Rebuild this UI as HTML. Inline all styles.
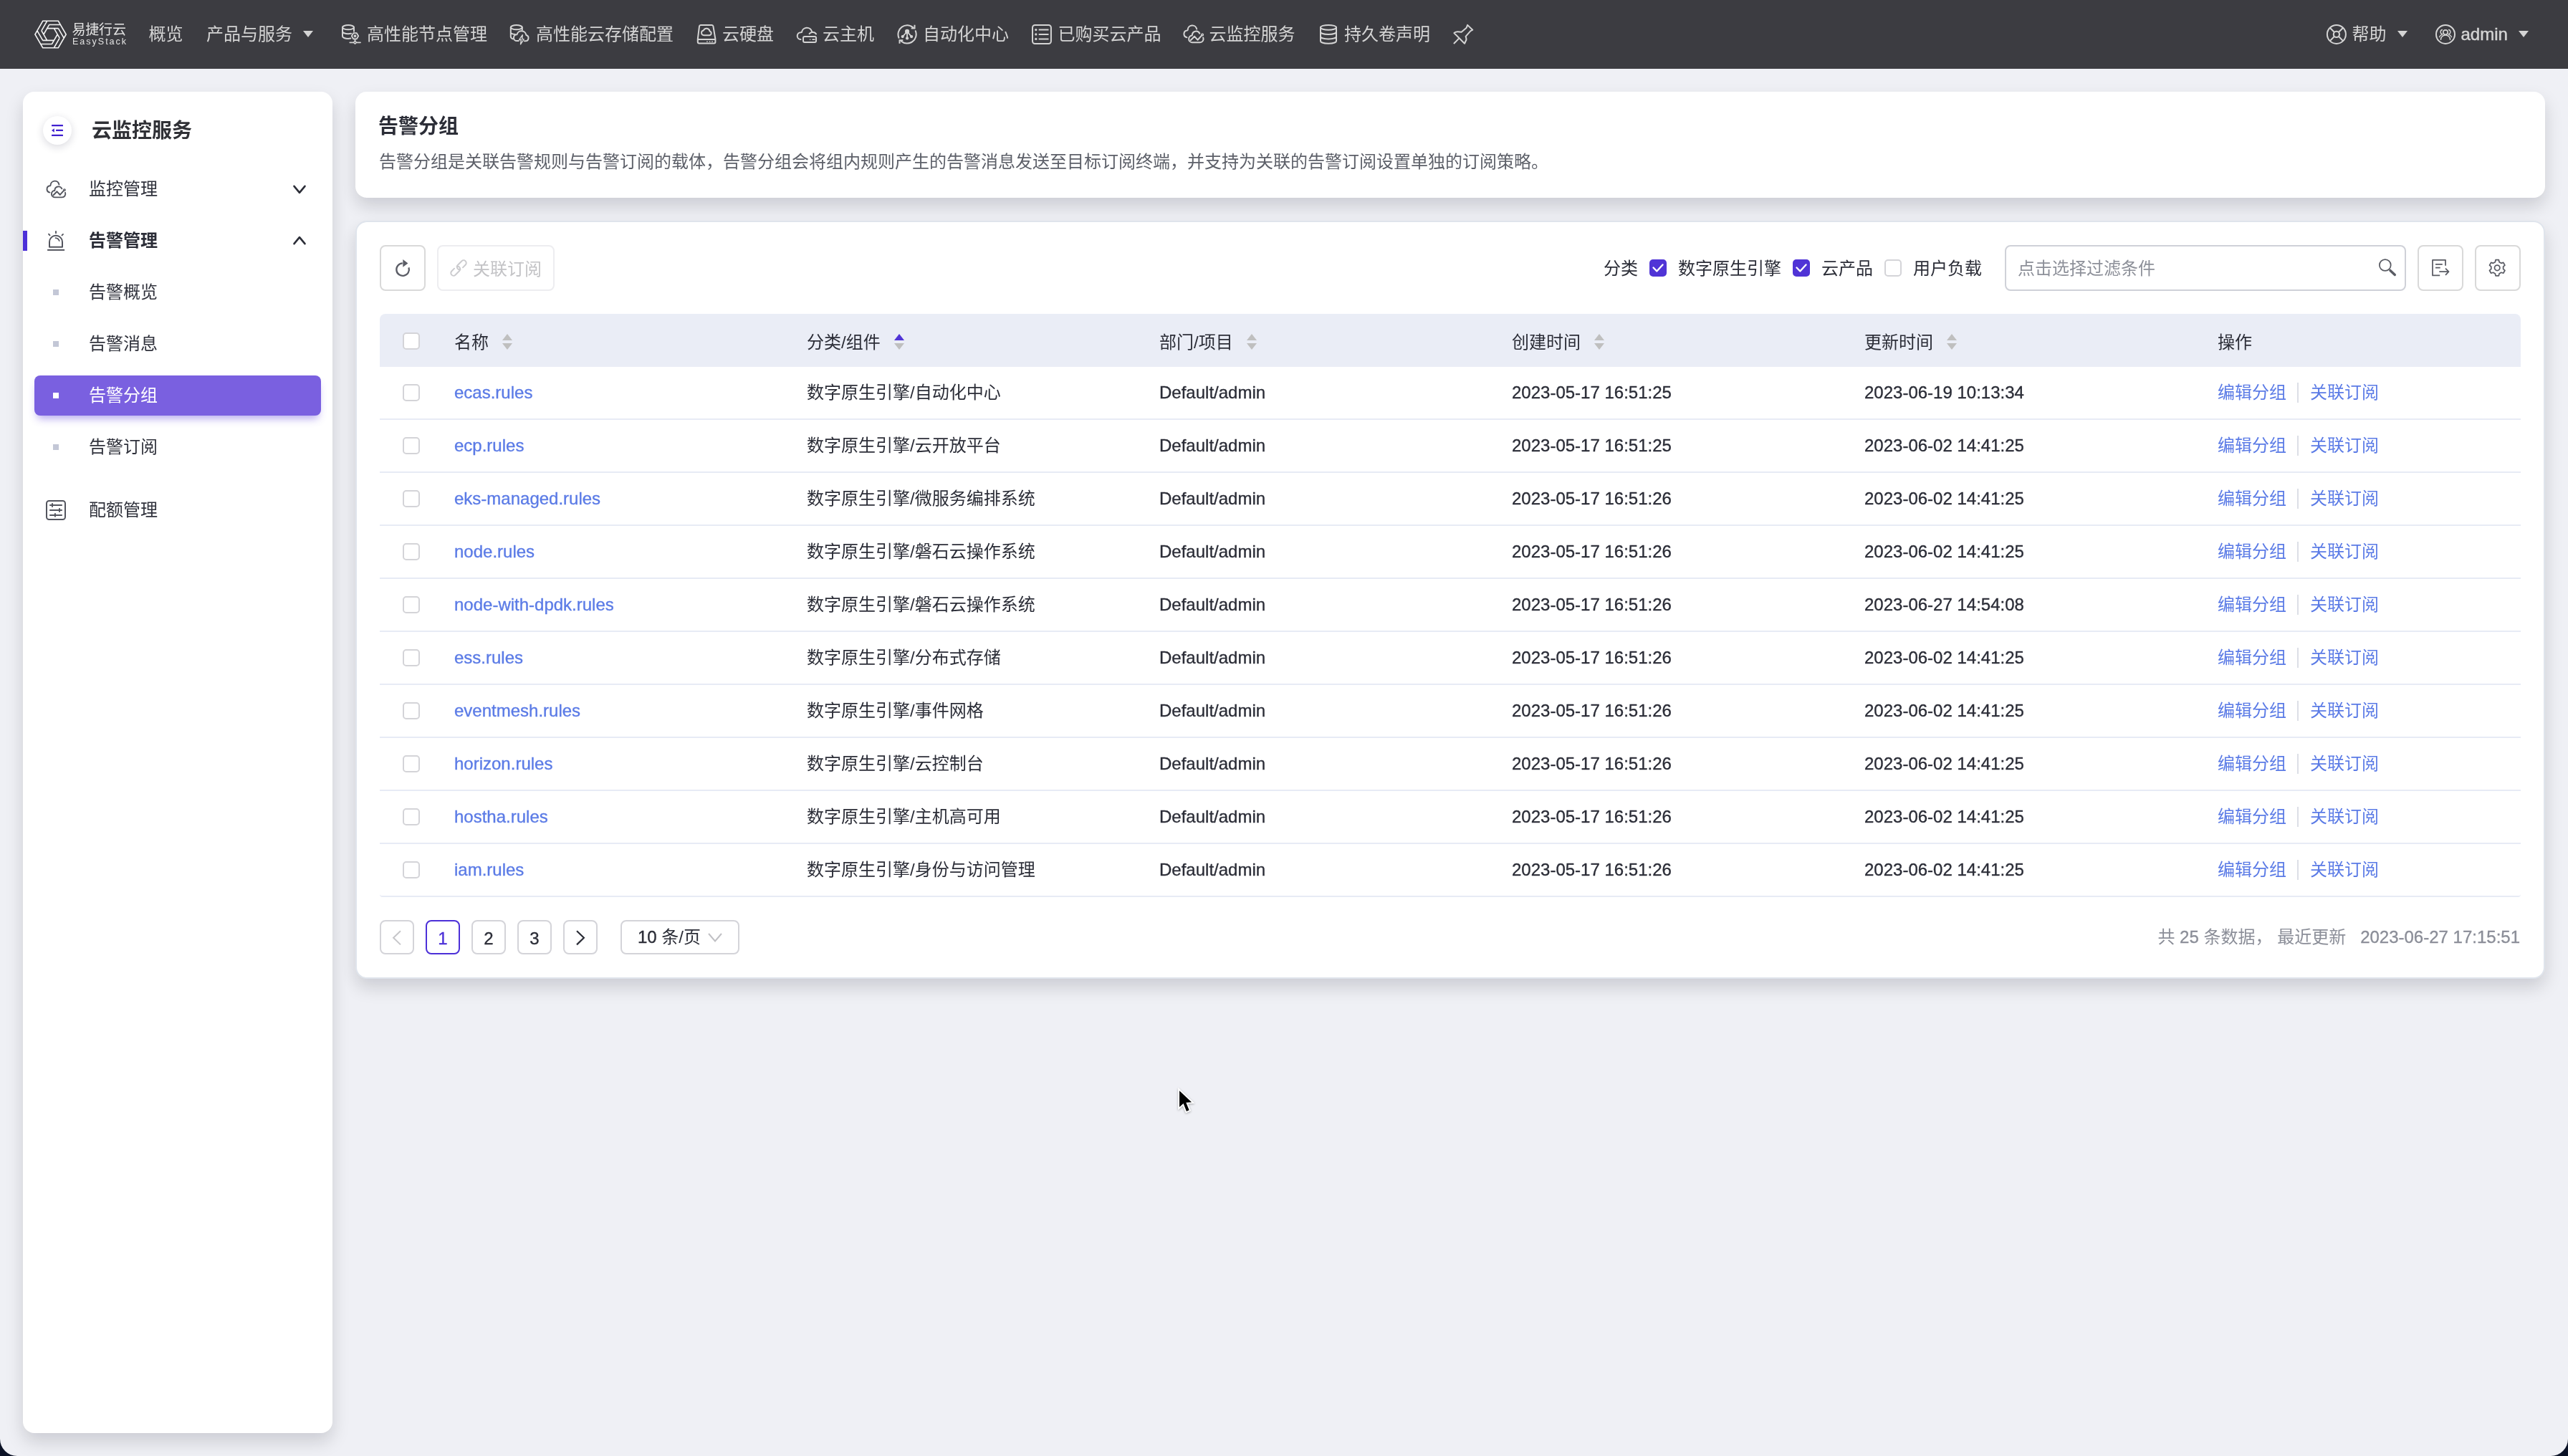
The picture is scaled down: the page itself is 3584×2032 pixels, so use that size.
<!DOCTYPE html><html lang="zh-CN"><head><meta charset="utf-8"><title>告警分组</title><style>
*{box-sizing:border-box;margin:0;padding:0}
html,body{width:3584px;height:2032px;overflow:hidden}
body{position:relative;background:#eff0f5;font-family:"Liberation Sans","Noto Sans CJK SC",sans-serif;font-size:24px;color:#2b2d37;-webkit-font-smoothing:antialiased}
#root{position:absolute;left:0;top:0;width:3584px;height:2032px;overflow:hidden;will-change:transform}
.abs{position:absolute}
svg{position:absolute;overflow:visible}
.t{position:absolute;white-space:nowrap}
#hdr{position:absolute;left:0;top:0;width:3584px;height:96px;background:#3c3c41;color:#d4d4d4}
#hdr .t{top:0;height:96px;line-height:96px;font-size:24px}
#hdr svg{fill:none;stroke:#d4d4d4;stroke-width:2;stroke-linecap:round;stroke-linejoin:round}
#hdr svg.f{fill:#d4d4d4;stroke:none}
.card{position:absolute;background:#fff;border-radius:16px;box-shadow:0 12px 24px rgba(8,8,22,.15)}
#side .t{font-size:24px;height:72px;line-height:72px;left:92px;color:#2f313b}
#side svg{fill:none;stroke:#53555e;stroke-width:2;stroke-linecap:round;stroke-linejoin:round}
.bul{position:absolute;left:42px;width:8px;height:8px;background:#c3c7d6}
#c2 .t{font-size:24px}
.btn{position:absolute;border:2px solid #d9d9d9;border-radius:8px;background:#fff}
.cb{position:absolute;width:24px;height:24px;border:2px solid #d4d4d8;border-radius:5px;background:#fff}
.cb.on{background:#5034d6;border-color:#5034d6}
.th{position:absolute;top:0;height:74px;line-height:80px;color:#2b2d37}
.row{position:absolute;left:0;width:2988px;height:74px;border-bottom:2px solid #e7ebf5}
.row .t{top:0;height:72px;line-height:72px}
.lk{color:#5b7be6}
.la{-webkit-text-stroke:.35px currentColor}
.sep{position:absolute;top:22px;width:2px;height:28px;background:#dcdfe6}
.pg{position:absolute;top:0;width:48px;height:48px;border:2px solid #d4d4d9;border-radius:8px;text-align:center;line-height:47px;font-size:24px;color:#2b2d37;background:#fff}
.sort{position:absolute;top:28px;width:14px;height:22px}
.sort i,.sort b{position:absolute;left:0;width:0;height:0;border-left:7px solid transparent;border-right:7px solid transparent}
.sort i{top:0;border-bottom:9px solid #bfbfbf}
.sort b{top:13px;border-top:9px solid #bfbfbf}
.sort.up i{border-bottom-color:#5034d6}
</style></head><body><div id="root">
<div id="hdr">
<svg style="left:0px;top:0px;left:0;top:0;stroke:#f2f2f2;stroke-width:1.6;stroke-linecap:butt;stroke-linejoin:miter" width="100" height="96" viewBox="0 0 100 96"><path d="M92.2 48 L81.38 66.75 L59.72 66.75 L48.9 48 L59.72 29.25 L81.38 29.25Z M65.73 39.65 L81.38 39.65 M68.73 34.45 L84.38 34.45 M75.37 39.65 L83.19 53.2 M81.38 39.65 L89.2 53.2 M80.19 48 L72.37 61.55 M83.19 53.2 L75.37 66.75 M75.37 56.35 L59.72 56.35 M72.37 61.55 L56.72 61.55 M65.73 56.35 L57.91 42.8 M59.72 56.35 L51.9 42.8 M60.91 48 L68.73 34.45 M57.91 42.8 L65.73 29.25"/></svg>
<div class="t" style="left:100.5px;top:29.5px;height:24px;line-height:24px;font-size:19px;letter-spacing:-0.2px;color:#e4e4e4">易捷行云</div>
<div class="t" style="left:101px;top:50px;height:16px;line-height:16px;font-size:12.5px;letter-spacing:2px;color:#e4e4e4">EasyStack</div>
<div class="t" style="left:207.5px">概览</div>
<div class="t" style="left:288px">产品与服务</div>
<svg style="left:476px;top:34px;" width="30" height="30" viewBox="0 0 30 30" stroke-width="1.8"><ellipse cx="10" cy="4.2" rx="8" ry="3.1"/><path d="M2 4.200V16.800C2 18.500 5.600 19.900 10 19.900c1.200 0 2.300-.100 3.300-.300M2 10.100c0 1.700 3.600 3.100 8 3.100 1.500 0 2.900-.200 4.100-.450M18 4.200V9.700"/><path d="M24.200 16.250l-2.350 4.070h-4.700l-2.350-4.070 2.350-4.070h4.700z" stroke-width="1.8"/><circle cx="19.500" cy="16.250" r="1.100" stroke-width="1.600"/><path d="M19.500 20.600v3M12.300 25.300h5.400M21.300 25.300H27" stroke-width="1.800"/><path d="M19.500 23.300l2 2-2 2-2-2z" stroke-width="1.400"/></svg>
<div class="t" style="left:512px">高性能节点管理</div>
<svg style="left:710px;top:34px;" width="30" height="30" viewBox="0 0 30 30" stroke-width="1.8"><ellipse cx="10.800" cy="4.200" rx="8" ry="3.100"/><path d="M2.800 4.200V17.300c0 1.200 1.100 2.300 3 3.100M2.800 11.300c0 1.300 2.600 2.400 6.200 2.800M18.800 4.200V7.800"/><path d="M13.800 23.100H11.300A4.400 4.400 0 0 1 11.400 14.300A6.600 6.600 0 0 1 24.330 14.930A4.200 4.200 0 0 1 23.300 23.200H22"/><path d="M19.300 14.600l-4.700 6.900h2.750l-.850 6.300 4.560-7-2.360-.400z" stroke-width="1.400"/></svg>
<div class="t" style="left:748px">高性能云存储配置</div>
<svg style="left:972px;top:34px;" width="30" height="30" viewBox="0 0 30 30" stroke-width="1.9"><path d="M5.900 .900H21.400a2 2 0 0 1 1.980 1.700L26.400 20.500V24.500a2 2 0 0 1-2 2H3.800a2 2 0 0 1-2-2V20.500L4 2.600A2 2 0 0 1 5.900 .900zM1.800 20.900H26.400"/><path d="M10.400 15.200a3.400 3.400 0 0 1-.5-6.760 4.600 4.600 0 0 1 8.700 1.100 2.900 2.900 0 0 1-.4 5.660z" stroke-width="1.900"/><path d="M14.200 24h1.500M17.800 24h1.500M21.300 24h1.500" stroke-width="1.700" stroke-linecap="butt"/></svg>
<div class="t" style="left:1008px">云硬盘</div>
<svg style="left:1111px;top:34px;" width="30" height="30" viewBox="0 0 30 30" stroke-width="1.9"><path d="M6.500 21.100a4.950 4.950 0 0 1 .300-9.900l1.100-.100a7.300 7.300 0 0 1 14.300-.900"/><path d="M18.600 13.200a5.200 5.200 0 0 1 4.100-2.200 5.200 5.200 0 0 1 5.300 2.500"/><rect x="10" y="17.100" width="18" height="7.900" rx="2"/><path d="M19.600 20.400v1.400M22.500 21.100h4" stroke-width="1.600" stroke-linecap="butt"/></svg>
<div class="t" style="left:1148px">云主机</div>
<svg style="left:1252px;top:34px;" width="30" height="30" viewBox="0 0 30 30" stroke-width="1.900"><path d="M2.45 18.82A12.6 12.6 0 0 1 22.48 4.54M25.73 9.18A12.6 12.6 0 0 1 5.78 23.41"/><path d="M24.500 .800v4.600h-4.800M3.500 26.800v-4.600h4.800" stroke-linecap="butt" stroke-linejoin="miter" stroke-width="2"/><path d="M14.050 10V19.300M14.050 10L7.700 17.100M14.050 10L20.100 17.100" stroke-width="1.800"/><g fill="#d4d4d4" stroke="none"><circle cx="14.050" cy="9.900" r="3.100"/><circle cx="7.700" cy="17.100" r="2.100"/><circle cx="14.050" cy="19.400" r="2.100"/><circle cx="20.100" cy="17.100" r="2.100"/></g></svg>
<div class="t" style="left:1288px">自动化中心</div>
<svg style="left:1439px;top:34px;" width="30" height="30" viewBox="0 0 30 30" stroke-width="2"><rect x="2" y=".900" width="25.900" height="26.100" rx="3.500"/><path d="M10.700 7.600H24.500M10.700 13.900H24.500M10.700 20.400H24.500" stroke-linecap="butt"/><g fill="#d4d4d4" stroke="none"><circle cx="6.800" cy="7.600" r="1.600"/><circle cx="6.800" cy="13.900" r="1.600"/><circle cx="6.800" cy="20.400" r="1.600"/></g></svg>
<div class="t" style="left:1476.5px">已购买云产品</div>
<svg style="left:1651px;top:34px;" width="30" height="30" viewBox="0 0 30 30" stroke-width="1.900"><path d="M5.440 18.200A4.950 4.950 0 0 1 6 8.400l.700-.700A6.300 6.300 0 0 1 19.200 6.600"/><path d="M23.300 12.700A5.500 5.500 0 0 0 12.860 14.900l-.260 .550A4.950 4.950 0 0 0 12.600 25.300H23.300A4.950 4.950 0 0 0 28.200 18.450"/><path d="M10.660 22.300L16.150 16.800L20.550 21.750L26 15.700"/><circle cx="27.100" cy="14.500" r="1.300" stroke-width="1.400"/></svg>
<div class="t" style="left:1687.5px">云监控服务</div>
<svg style="left:1840px;top:34px;" width="30" height="30" viewBox="0 0 30 30" stroke-width="2"><ellipse cx="14" cy="4.300" rx="11" ry="3.400"/><path d="M3 4.300V23.300c0 1.900 4.900 3.400 11 3.400s11-1.500 11-3.400V4.300M3 10.600c0 1.900 4.900 3.400 11 3.400s11-1.500 11-3.400M3 17c0 1.900 4.900 3.400 11 3.400s11-1.500 11-3.400"/></svg>
<div class="t" style="left:1876px">持久卷声明</div>
<svg class="f" style="left:423px;top:43px" width="14" height="9" viewBox="0 0 14 9"><path d="M0 0h14L7 9z"/></svg>
<svg style="left:2027px;top:34px;" width="30" height="30" viewBox="0 0 30 30" stroke-width="2" stroke-linejoin="round"><path d="M21.100 .900L28.200 7.700L25.200 9.400L18.600 16.800C19.300 18.500 19.500 20 19.450 21.500L17 26.700L2.400 12.100C4 10 6.500 9.500 12.600 10.800L19.700 4.700z"/><path d="M9 19.800L1.900 27" stroke-linecap="butt"/></svg>
<svg style="left:3247px;top:34px;" width="30" height="30" viewBox="0 0 30 30" stroke-width="2.200"><circle cx="13.900" cy="13.900" r="13"/><circle cx="13.900" cy="13.900" r="4.100" stroke-width="2.100"/><path d="M4.700 4.700L11 11M23.100 4.700L16.800 11M4.700 23.100L11 16.800M23.100 23.100L16.800 16.800" stroke-linecap="butt"/></svg>
<div class="t" style="left:3282.5px">帮助</div>
<svg class="f" style="left:3346px;top:43px" width="14" height="9" viewBox="0 0 14 9"><path d="M0 0h14L7 9z"/></svg>
<svg style="left:3399px;top:34px;" width="30" height="30" viewBox="0 0 30 30" stroke-width="2.100"><circle cx="14" cy="13.900" r="13"/><circle cx="14" cy="11.050" r="3.200" stroke-width="1.600"/><path d="M7.500 21.200A6.500 6.300 0 0 1 20.500 21.200" stroke-width="1.600"/><path d="M9.400 7.500A3.200 3.200 0 0 0 9.650 13.700M9.400 14.400A5.500 5.500 0 0 0 5.500 17.700M18.600 7.500A3.200 3.200 0 0 1 18.350 13.700M18.600 14.400A5.500 5.500 0 0 1 22.500 17.700" stroke-width="1.400"/></svg>
<div class="t" style="left:3434.5px;-webkit-text-stroke:.450px currentColor">admin</div>
<svg class="f" style="left:3515px;top:43px" width="14" height="9" viewBox="0 0 14 9"><path d="M0 0h14L7 9z"/></svg>
</div>
<div id="side" class="card" style="left:32px;top:128px;width:432px;height:1872px">
<div class="abs" style="left:28px;top:34px;width:40px;height:40px;border-radius:50%;background:#fff;box-shadow:0 3px 12px rgba(20,20,50,.16)"></div>
<svg style="left:40px;top:46px;stroke:none;fill:#4020d0" width="18" height="18" viewBox="0 0 18 18"><rect x="0" y="0" width="16" height="2.300" rx=".600"/><rect x="6" y="6.800" width="10" height="2.300" rx=".600"/><rect x="0" y="13.700" width="16" height="2.300" rx=".600"/><path d="M0 7.950L3.800 5.200V10.700z"/></svg>
<div class="t" style="left:96px;top:19px;font-size:28px;font-weight:700;color:#303136">云监控服务</div>
<svg style="left:32px;top:122px;" width="30" height="30" viewBox="0 0 30 30" stroke-width="1.900"><g transform="translate(.2 1.300) scale(.950)"><path d="M5.440 18.200A4.950 4.950 0 0 1 6 8.400l.700-.700A6.300 6.300 0 0 1 19.200 6.600"/><path d="M23.300 12.700A5.500 5.500 0 0 0 12.860 14.900l-.260 .550A4.950 4.950 0 0 0 12.600 25.300H23.300A4.950 4.950 0 0 0 28.200 18.450"/><path d="M10.660 22.300L16.150 16.800L20.550 21.750L26 15.700"/><circle cx="27.100" cy="14.500" r="1.300" stroke-width="1.400"/></g></svg>
<div class="t" style="top:100px">监控管理</div>
<svg style="left:377px;top:130px;stroke:#2b2d37;stroke-width:2.6" width="18" height="13" viewBox="0 0 18 13"><path d="M1.500 1.800L9 10.800L16.500 1.800"/></svg>
<div class="abs" style="left:0;top:194px;width:6px;height:28px;background:#4c30d8"></div>
<svg style="left:32px;top:194px;" width="30" height="30" viewBox="0 0 30 30" stroke-width="2"><path d="M5 22.700V15.700A9 9 0 0 1 23 15.700V22.700z"/><path d="M2.100 26.900H26.100" stroke-linecap="butt"/><path d="M14 .900V3.300M4 4.700L5.500 6.300M24 4.900L22.500 6.400" stroke-width="1.900"/><path d="M13.500 10.100A5.800 5.800 0 0 1 18.700 14.100" stroke-width="1.700"/></svg>
<div class="t" style="top:172px;font-weight:700;color:#2b2d37">告警管理</div>
<svg style="left:377px;top:201px;stroke:#2b2d37;stroke-width:2.6" width="18" height="13" viewBox="0 0 18 13"><path d="M1.500 11.200L9 2.200L16.500 11.200"/></svg>
<div class="bul" style="top:276px"></div>
<div class="t" style="top:244px">告警概览</div>
<div class="bul" style="top:348px"></div>
<div class="t" style="top:316px">告警消息</div>
<div class="abs" style="left:16px;top:396px;width:400px;height:56px;border-radius:8px;background:#7a60e0;box-shadow:0 8px 12px -4px rgba(90,60,220,.45)"></div>
<div class="bul" style="top:420px;background:#fff"></div>
<div class="t" style="top:388px;color:#fff">告警分组</div>
<div class="bul" style="top:492px"></div>
<div class="t" style="top:460px">告警订阅</div>
<svg style="left:32px;top:570px;" width="30" height="30" viewBox="0 0 30 30" stroke-width="2"><rect x="1" y="1" width="26" height="26" rx="3.500"/><path d="M5.200 7H22.800M5.200 13.900H22.800M5.200 21H22.800M9 4.300V9.800M19 11.300V16.700M12.900 18.200V23.600" stroke-linecap="butt"/></svg>
<div class="t" style="top:548px">配额管理</div>
</div>
<div id="c1" class="card" style="left:496px;top:128px;width:3056px;height:148px">
<div class="t" style="left:32px;top:26px;height:44px;line-height:45px;font-size:28px;font-weight:700;color:#2b2d37">告警分组</div>
<div class="t" style="left:33px;top:78px;height:40px;line-height:40px;font-size:24px;color:#5d6069">告警分组是关联告警规则与告警订阅的载体，告警分组会将组内规则产生的告警消息发送至目标订阅终端，并支持为关联的告警订阅设置单独的订阅策略。</div>
</div>
<div id="c2" class="card" style="left:496px;top:308px;width:3056px;height:1058px;border:2px solid #dfe4ec">
<div class="btn" style="left:32px;top:32px;width:64px;height:64px"></div>
<svg style="left:51px;top:50px;" width="28" height="28" viewBox="0 0 28 28" fill="none" stroke="#5b5d66" stroke-width="2.300" stroke-linecap="butt"><path d="M21.47 13.38A8.8 8.8 0 1 1 12.79 7.31"/><path d="M13.300 2.100V12.700L20.400 7.400z" fill="#5b5d66" stroke="none"/></svg>
<div class="btn" style="left:112px;top:32px;width:164px;height:64px;border-color:#ededf0"></div>
<svg style="left:130px;top:52px;" width="24" height="24" viewBox="0 0 24 24" fill="none" stroke="#cbcbce" stroke-width="1.900" stroke-linecap="round"><path d="M17.93 11.31 L21.74 7.49 A3.7 3.7 0 0 0 16.51 2.26 L10.78 7.98 A3.7 3.7 0 0 0 14.5 14.05M6.07 12.69 L2.26 16.51 A3.7 3.7 0 0 0 7.49 21.74 L13.22 16.02 A3.7 3.7 0 0 0 9.5 9.95"/></svg>
<div class="t" style="left:162px;top:32px;height:64px;line-height:67px;color:#c3c3c6">关联订阅</div>
<div class="t" style="left:1740px;top:32px;height:64px;line-height:65px">分类</div>
<div class="cb on" style="left:1804px;top:52px"></div><svg style="left:1808px;top:58px" width="16" height="12" viewBox="0 0 16 12" fill="none" stroke="#fff" stroke-width="2.4" stroke-linecap="round" stroke-linejoin="round"><path d="M1.5 5.500l4.800 5L14.500 1.500"/></svg>
<div class="t" style="left:1844px;top:32px;height:64px;line-height:65px">数字原生引擎</div>
<div class="cb on" style="left:2004px;top:52px"></div><svg style="left:2008px;top:58px" width="16" height="12" viewBox="0 0 16 12" fill="none" stroke="#fff" stroke-width="2.4" stroke-linecap="round" stroke-linejoin="round"><path d="M1.5 5.500l4.800 5L14.500 1.500"/></svg>
<div class="t" style="left:2044px;top:32px;height:64px;line-height:65px">云产品</div>
<div class="cb" style="left:2132px;top:52px"></div>
<div class="t" style="left:2172px;top:32px;height:64px;line-height:65px">用户负载</div>
<div class="btn" style="left:2300px;top:32px;width:560px;height:64px;border-color:#cfd1d8"></div>
<div class="t" style="left:2318px;top:32px;height:64px;line-height:65px;color:#8d9099">点击选择过滤条件</div>
<svg style="left:2820px;top:50px;" width="28" height="28" viewBox="0 0 28 28" fill="none" stroke="#595b63" stroke-width="1.750" stroke-linecap="round"><circle cx="10.800" cy="10" r="7.900"/><path d="M17.900 17.400L24.300 23.500" stroke-width="3.400"/></svg>
<div class="btn" style="left:2876px;top:32px;width:64px;height:64px;border-color:#d9d9d9"></div>
<svg style="left:2894px;top:51px;" width="28" height="28" viewBox="0 0 28 28" fill="none" stroke="#595b63" stroke-width="1.750" stroke-linecap="butt" stroke-linejoin="round"><path d="M21 9.700V1.900H3V23.400H13.200M7 7.900H16.800M7 12.600H13.700M12.300 18.200H25M21 13.700L25.500 18.200L21 22.900"/></svg>
<div class="btn" style="left:2956px;top:32px;width:64px;height:64px;border-color:#d9d9d9"></div>
<svg style="left:2975px;top:51px;" width="28" height="28" viewBox="0 0 28 28" fill="none" stroke="#595b63" stroke-width="1.750" stroke-linejoin="round"><path d="M9.4 4.67 L10.04 1.71 L14.36 1.71 L15 4.67 L17.84 6.31 L20.73 5.39 L22.88 9.12 L20.64 11.16 L20.64 14.44 L22.88 16.48 L20.73 20.21 L17.84 19.29 L15 20.93 L14.36 23.89 L10.04 23.89 L9.4 20.93 L6.56 19.29 L3.67 20.21 L1.52 16.48 L3.76 14.44 L3.76 11.16 L1.52 9.12 L3.67 5.39 L6.56 6.31Z"/><circle cx="12.2" cy="12.8" r="3.700"/></svg>
<div class="abs" style="left:32px;top:128px;width:2988px;height:814px">
<div class="abs" style="left:0;top:0;width:2988px;height:74px;background:#eaedf6;border-radius:8px 8px 0 0"></div>
<div class="cb" style="left:32px;top:26px"></div>
<div class="t th" style="left:104px">名称</div>
<div class="sort" style="left:171px"><i></i><b></b></div>
<div class="t th" style="left:596px">分类/组件</div>
<div class="sort up" style="left:718px"><i></i><b></b></div>
<div class="t th" style="left:1088px">部门/项目</div>
<div class="sort" style="left:1210px"><i></i><b></b></div>
<div class="t th" style="left:1580px">创建时间</div>
<div class="sort" style="left:1695px"><i></i><b></b></div>
<div class="t th" style="left:2072px">更新时间</div>
<div class="sort" style="left:2187px"><i></i><b></b></div>
<div class="t th" style="left:2565px">操作</div>
<div class="row" style="top:74px">
<div class="cb" style="left:32px;top:24px"></div>
<div class="t lk la" style="left:104px">ecas.rules</div>
<div class="t" style="left:596px">数字原生引擎/自动化中心</div>
<div class="t la" style="left:1088px">Default/admin</div>
<div class="t la" style="left:1580px">2023-05-17 16:51:25</div>
<div class="t la" style="left:2072px">2023-06-19 10:13:34</div>
<div class="t lk" style="left:2565px">编辑分组</div><div class="sep" style="left:2676px"></div><div class="t lk" style="left:2694px">关联订阅</div>
</div>
<div class="row" style="top:148px">
<div class="cb" style="left:32px;top:24px"></div>
<div class="t lk la" style="left:104px">ecp.rules</div>
<div class="t" style="left:596px">数字原生引擎/云开放平台</div>
<div class="t la" style="left:1088px">Default/admin</div>
<div class="t la" style="left:1580px">2023-05-17 16:51:25</div>
<div class="t la" style="left:2072px">2023-06-02 14:41:25</div>
<div class="t lk" style="left:2565px">编辑分组</div><div class="sep" style="left:2676px"></div><div class="t lk" style="left:2694px">关联订阅</div>
</div>
<div class="row" style="top:222px">
<div class="cb" style="left:32px;top:24px"></div>
<div class="t lk la" style="left:104px">eks-managed.rules</div>
<div class="t" style="left:596px">数字原生引擎/微服务编排系统</div>
<div class="t la" style="left:1088px">Default/admin</div>
<div class="t la" style="left:1580px">2023-05-17 16:51:26</div>
<div class="t la" style="left:2072px">2023-06-02 14:41:25</div>
<div class="t lk" style="left:2565px">编辑分组</div><div class="sep" style="left:2676px"></div><div class="t lk" style="left:2694px">关联订阅</div>
</div>
<div class="row" style="top:296px">
<div class="cb" style="left:32px;top:24px"></div>
<div class="t lk la" style="left:104px">node.rules</div>
<div class="t" style="left:596px">数字原生引擎/磐石云操作系统</div>
<div class="t la" style="left:1088px">Default/admin</div>
<div class="t la" style="left:1580px">2023-05-17 16:51:26</div>
<div class="t la" style="left:2072px">2023-06-02 14:41:25</div>
<div class="t lk" style="left:2565px">编辑分组</div><div class="sep" style="left:2676px"></div><div class="t lk" style="left:2694px">关联订阅</div>
</div>
<div class="row" style="top:370px">
<div class="cb" style="left:32px;top:24px"></div>
<div class="t lk la" style="left:104px">node-with-dpdk.rules</div>
<div class="t" style="left:596px">数字原生引擎/磐石云操作系统</div>
<div class="t la" style="left:1088px">Default/admin</div>
<div class="t la" style="left:1580px">2023-05-17 16:51:26</div>
<div class="t la" style="left:2072px">2023-06-27 14:54:08</div>
<div class="t lk" style="left:2565px">编辑分组</div><div class="sep" style="left:2676px"></div><div class="t lk" style="left:2694px">关联订阅</div>
</div>
<div class="row" style="top:444px">
<div class="cb" style="left:32px;top:24px"></div>
<div class="t lk la" style="left:104px">ess.rules</div>
<div class="t" style="left:596px">数字原生引擎/分布式存储</div>
<div class="t la" style="left:1088px">Default/admin</div>
<div class="t la" style="left:1580px">2023-05-17 16:51:26</div>
<div class="t la" style="left:2072px">2023-06-02 14:41:25</div>
<div class="t lk" style="left:2565px">编辑分组</div><div class="sep" style="left:2676px"></div><div class="t lk" style="left:2694px">关联订阅</div>
</div>
<div class="row" style="top:518px">
<div class="cb" style="left:32px;top:24px"></div>
<div class="t lk la" style="left:104px">eventmesh.rules</div>
<div class="t" style="left:596px">数字原生引擎/事件网格</div>
<div class="t la" style="left:1088px">Default/admin</div>
<div class="t la" style="left:1580px">2023-05-17 16:51:26</div>
<div class="t la" style="left:2072px">2023-06-02 14:41:25</div>
<div class="t lk" style="left:2565px">编辑分组</div><div class="sep" style="left:2676px"></div><div class="t lk" style="left:2694px">关联订阅</div>
</div>
<div class="row" style="top:592px">
<div class="cb" style="left:32px;top:24px"></div>
<div class="t lk la" style="left:104px">horizon.rules</div>
<div class="t" style="left:596px">数字原生引擎/云控制台</div>
<div class="t la" style="left:1088px">Default/admin</div>
<div class="t la" style="left:1580px">2023-05-17 16:51:26</div>
<div class="t la" style="left:2072px">2023-06-02 14:41:25</div>
<div class="t lk" style="left:2565px">编辑分组</div><div class="sep" style="left:2676px"></div><div class="t lk" style="left:2694px">关联订阅</div>
</div>
<div class="row" style="top:666px">
<div class="cb" style="left:32px;top:24px"></div>
<div class="t lk la" style="left:104px">hostha.rules</div>
<div class="t" style="left:596px">数字原生引擎/主机高可用</div>
<div class="t la" style="left:1088px">Default/admin</div>
<div class="t la" style="left:1580px">2023-05-17 16:51:26</div>
<div class="t la" style="left:2072px">2023-06-02 14:41:25</div>
<div class="t lk" style="left:2565px">编辑分组</div><div class="sep" style="left:2676px"></div><div class="t lk" style="left:2694px">关联订阅</div>
</div>
<div class="row" style="top:740px;border-radius:0 0 4px 4px">
<div class="cb" style="left:32px;top:24px"></div>
<div class="t lk la" style="left:104px">iam.rules</div>
<div class="t" style="left:596px">数字原生引擎/身份与访问管理</div>
<div class="t la" style="left:1088px">Default/admin</div>
<div class="t la" style="left:1580px">2023-05-17 16:51:26</div>
<div class="t la" style="left:2072px">2023-06-02 14:41:25</div>
<div class="t lk" style="left:2565px">编辑分组</div><div class="sep" style="left:2676px"></div><div class="t lk" style="left:2694px">关联订阅</div>
</div>
</div>
<div class="abs" style="left:32px;top:974px;width:2988px;height:48px">
<div class="pg" style="left:0"></div><svg style="left:17px;top:14px" width="14" height="22" viewBox="0 0 14 22" fill="none" stroke="#c6c6c9" stroke-width="2"><path d="M12 1.200L2.100 10.800L12 20.400"/></svg>
<div class="pg" style="left:64px;border-color:#4c30d8;color:#4c30d8"><span class="la">1</span></div>
<div class="pg la" style="left:128px">2</div>
<div class="pg la" style="left:192px">3</div>
<div class="pg" style="left:256px"></div><svg style="left:273px;top:14px" width="14" height="22" viewBox="0 0 14 22" fill="none" stroke="#2b2d37" stroke-width="2.200"><path d="M2 1.200L11.900 10.800L2 20.400"/></svg>
<div class="pg" style="left:336px;width:166px;text-align:left;padding-left:22px;line-height:44px"><span class="la">10</span> 条/页</div><svg style="left:458px;top:18px" width="20" height="13" viewBox="0 0 20 13" fill="none" stroke="#c0c0c4" stroke-width="2"><path d="M1 1l9 10.500L19 1"/></svg>
<div class="t" style="right:1px;top:0;height:48px;line-height:48px;color:#8b8e98">共 <span class="la">25</span> 条数据， 最近更新&nbsp;&nbsp;&nbsp;<span class="la">2023-06-27 17:15:51</span></div>
</div>
</div>
<svg style="left:1640px;top:1514px" width="36" height="46" viewBox="0 0 36 46"><g filter="drop-shadow(0 1.500px 1.500px rgba(0,0,0,.300))"><path d="M6.060 8.150V31L11.600 26.100L15.950 36.900L19.660 35.350L15.300 24.840L23.060 24.200z" fill="#000" stroke="#fff" stroke-width="3.800" stroke-linejoin="miter" stroke-miterlimit="8" paint-order="stroke"/></g></svg>
<svg style="left:0;top:2008px" width="24" height="24" viewBox="0 0 24 24"><path d="M0 0v24h24A24 24 0 0 1 0 0z" fill="#0b1226"/></svg>
<svg style="left:3560px;top:2008px" width="24" height="24" viewBox="0 0 24 24"><path d="M24 0v24H0A24 24 0 0 0 24 0z" fill="#0b1226"/></svg>
</div></body></html>
